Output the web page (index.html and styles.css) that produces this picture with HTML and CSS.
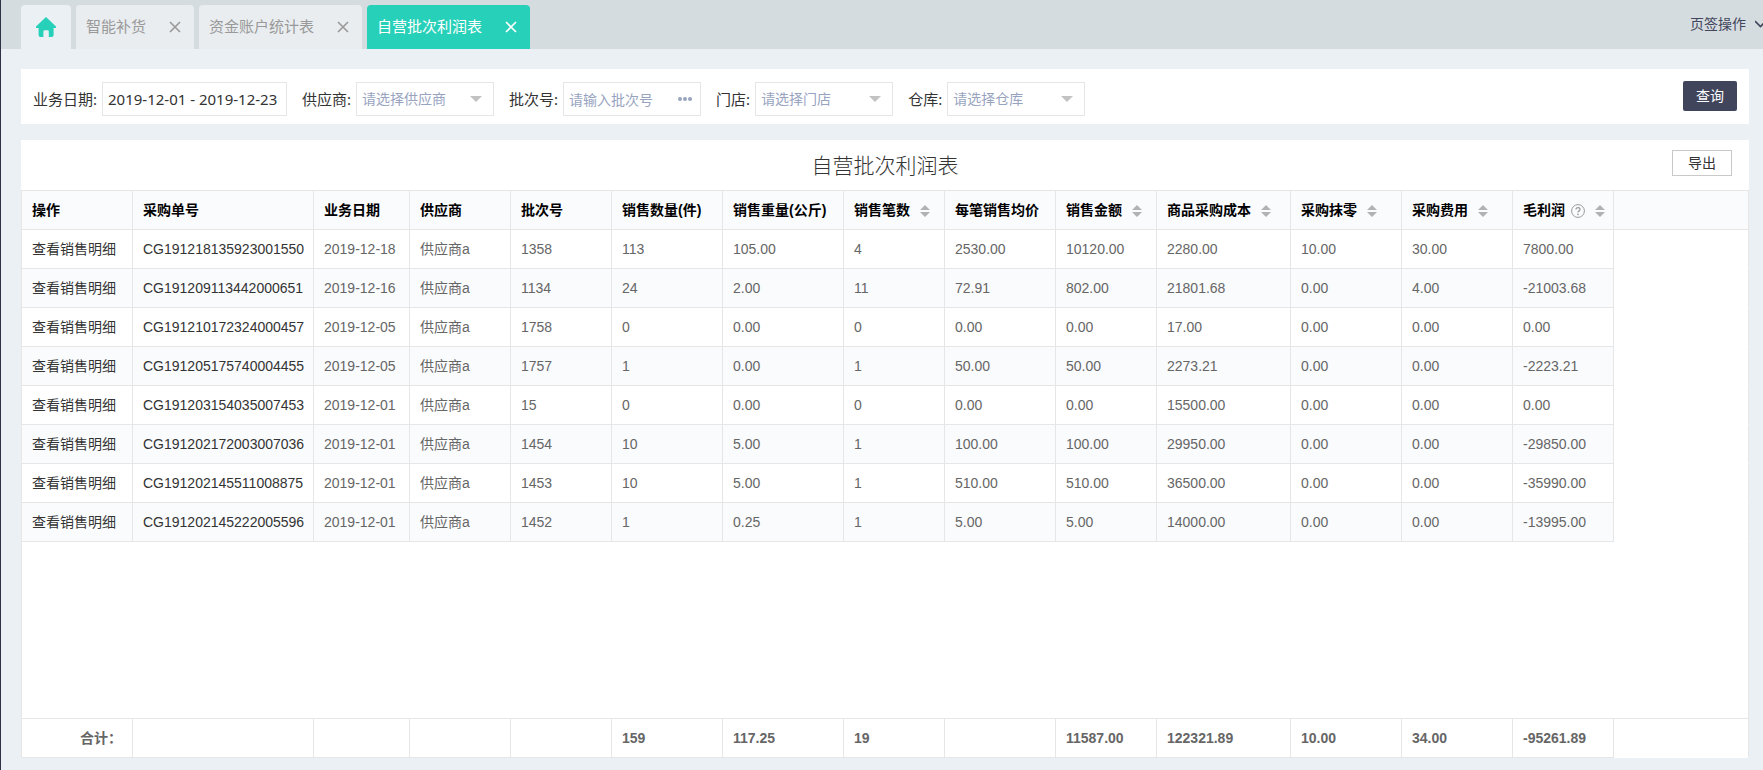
FILE: index.html
```html
<!DOCTYPE html>
<html lang="zh-CN">
<head>
<meta charset="utf-8">
<title>自营批次利润表</title>
<link rel="stylesheet" href="styles.css">
</head>
<body>
<svg class="sprite" aria-hidden="true">
  <symbol id="close" viewBox="0 0 12 12"><path d="M1 1l10 10M11 1L1 11" fill="none" stroke="currentColor" stroke-width="1.6"/></symbol>
  <symbol id="caret" viewBox="0 0 12 6"><path d="M0 0h12L6 6z" fill="currentColor"/></symbol>
  <symbol id="sort" viewBox="0 0 10 12"><path d="M0 5L5 0l5 5zM0 7h10l-5 5z" fill="currentColor"/></symbol>
</svg>

<header class="tabbar">
  <nav class="tabs">
    <a class="tab tab-home" href="#" aria-label="首页">
      <svg class="home-icon" viewBox="0 0 20 20"><path d="M10 0L20 9.6Q20.3 11 19 11H17.6V18Q17.6 20 15.8 20H12.8V14.5Q12.8 13.3 11.6 13.3H8.6Q7.4 13.3 7.4 14.5V20H4.4Q2.6 20 2.6 18V11H1Q-.3 11 0 9.6z" fill="currentColor"/></svg>
    </a>
    <div class="tab"><a href="#">智能补货</a><button class="tab-close" aria-label="关闭"><svg><use href="#close"/></svg></button></div>
    <div class="tab"><a href="#">资金账户统计表</a><button class="tab-close" aria-label="关闭"><svg><use href="#close"/></svg></button></div>
    <div class="tab tab-active"><a href="#">自营批次利润表</a><button class="tab-close" aria-label="关闭"><svg><use href="#close"/></svg></button></div>
  </nav>
  <button class="tab-ops">页签操作<svg viewBox="0 0 8 8"><path d="M0 1l5.500 5.500L11 1" fill="none" stroke="currentColor" stroke-width="1.600"/></svg></button>
</header>

<main class="content">
  <form class="panel filters">
    <div class="field"><label for="date">业务日期:</label><input id="date" class="control control-date" type="text" value="2019-12-01 - 2019-12-23"></div>
    <div class="field"><label for="supplier">供应商:</label><div class="control-box"><select id="supplier" class="control"><option>请选择供应商</option></select><svg class="caret"><use href="#caret"/></svg></div></div>
    <div class="field"><label for="batch">批次号:</label><div class="control-box"><input id="batch" class="control" type="text" placeholder="请输入批次号"><button class="more" type="button" aria-label="更多"><svg viewBox="0 0 14 4"><g fill="currentColor"><circle cx="2" cy="2" r="2"/><circle cx="7" cy="2" r="2"/><circle cx="12" cy="2" r="2"/></g></svg></button></div></div>
    <div class="field"><label for="store">门店:</label><div class="control-box"><select id="store" class="control"><option>请选择门店</option></select><svg class="caret"><use href="#caret"/></svg></div></div>
    <div class="field"><label for="depot">仓库:</label><div class="control-box"><select id="depot" class="control"><option>请选择仓库</option></select><svg class="caret"><use href="#caret"/></svg></div></div>
    <button class="btn-query" type="button">查询</button>
  </form>

  <section class="panel report">
    <div class="report-head">
      <h1>自营批次利润表</h1>
      <button class="btn-export">导出</button>
    </div>
    <div class="table-wrap">
      <table class="grid">
        <colgroup>
          <col class="w111"><col class="w181"><col class="w96"><col class="w101"><col class="w101"><col class="w111"><col class="w121"><col class="w101"><col class="w111"><col class="w101"><col class="w134"><col class="w111"><col class="w111"><col class="w101"><col>
        </colgroup>
        <thead>
          <tr>
            <th>操作</th><th>采购单号</th><th>业务日期</th><th>供应商</th><th>批次号</th><th>销售数量(件)</th><th>销售重量(公斤)</th>
            <th>销售笔数<svg class="sort"><use href="#sort"/></svg></th>
            <th>每笔销售均价</th>
            <th>销售金额<svg class="sort"><use href="#sort"/></svg></th>
            <th>商品采购成本<svg class="sort"><use href="#sort"/></svg></th>
            <th>采购抹零<svg class="sort"><use href="#sort"/></svg></th>
            <th>采购费用<svg class="sort"><use href="#sort"/></svg></th>
            <th>毛利润<svg class="help" viewBox="0 0 14 14"><g fill="none" stroke="currentColor"><circle cx="7" cy="7" r="6.400"/><path d="M5 5.600Q5 3.700 7 3.700T9 5.500Q9 6.500 7.800 7.100 7 7.500 7 8.600" stroke-width="1.200"/></g><circle cx="7" cy="10.400" r=".8" fill="currentColor"/></svg><svg class="sort"><use href="#sort"/></svg></th>
            <th></th>
          </tr>
        </thead>
        <tbody>
          <tr><td><a href="#">查看销售明细</a></td><td><a href="#">CG191218135923001550</a></td><td>2019-12-18</td><td>供应商a</td><td>1358</td><td>113</td><td>105.00</td><td>4</td><td>2530.00</td><td>10120.00</td><td>2280.00</td><td>10.00</td><td>30.00</td><td>7800.00</td><td></td></tr>
          <tr><td><a href="#">查看销售明细</a></td><td><a href="#">CG191209113442000651</a></td><td>2019-12-16</td><td>供应商a</td><td>1134</td><td>24</td><td>2.00</td><td>11</td><td>72.91</td><td>802.00</td><td>21801.68</td><td>0.00</td><td>4.00</td><td>-21003.68</td><td></td></tr>
          <tr><td><a href="#">查看销售明细</a></td><td><a href="#">CG191210172324000457</a></td><td>2019-12-05</td><td>供应商a</td><td>1758</td><td>0</td><td>0.00</td><td>0</td><td>0.00</td><td>0.00</td><td>17.00</td><td>0.00</td><td>0.00</td><td>0.00</td><td></td></tr>
          <tr><td><a href="#">查看销售明细</a></td><td><a href="#">CG191205175740004455</a></td><td>2019-12-05</td><td>供应商a</td><td>1757</td><td>1</td><td>0.00</td><td>1</td><td>50.00</td><td>50.00</td><td>2273.21</td><td>0.00</td><td>0.00</td><td>-2223.21</td><td></td></tr>
          <tr><td><a href="#">查看销售明细</a></td><td><a href="#">CG191203154035007453</a></td><td>2019-12-01</td><td>供应商a</td><td>15</td><td>0</td><td>0.00</td><td>0</td><td>0.00</td><td>0.00</td><td>15500.00</td><td>0.00</td><td>0.00</td><td>0.00</td><td></td></tr>
          <tr><td><a href="#">查看销售明细</a></td><td><a href="#">CG191202172003007036</a></td><td>2019-12-01</td><td>供应商a</td><td>1454</td><td>10</td><td>5.00</td><td>1</td><td>100.00</td><td>100.00</td><td>29950.00</td><td>0.00</td><td>0.00</td><td>-29850.00</td><td></td></tr>
          <tr><td><a href="#">查看销售明细</a></td><td><a href="#">CG191202145511008875</a></td><td>2019-12-01</td><td>供应商a</td><td>1453</td><td>10</td><td>5.00</td><td>1</td><td>510.00</td><td>510.00</td><td>36500.00</td><td>0.00</td><td>0.00</td><td>-35990.00</td><td></td></tr>
          <tr><td><a href="#">查看销售明细</a></td><td><a href="#">CG191202145222005596</a></td><td>2019-12-01</td><td>供应商a</td><td>1452</td><td>1</td><td>0.25</td><td>1</td><td>5.00</td><td>5.00</td><td>14000.00</td><td>0.00</td><td>0.00</td><td>-13995.00</td><td></td></tr>
          <tr class="spacer"><td colspan="15"></td></tr>
        </tbody>
        <tfoot>
          <tr><td class="total-label">合计：</td><td></td><td></td><td></td><td></td><td>159</td><td>117.25</td><td>19</td><td></td><td>11587.00</td><td>122321.89</td><td>10.00</td><td>34.00</td><td>-95261.89</td><td></td></tr>
        </tfoot>
      </table>
    </div>
  </section>
</main>
</body>
</html>
```
FILE: styles.css
```css
* { box-sizing: border-box; }

body {
  margin: 0;
  min-height: 100vh;
  display: flex;
  flex-direction: column;
  border-left: 1px solid #2f3144;
  background: #eaf0f4;
  color: #333;
  font: 14px/20px "Liberation Sans", "Noto Sans CJK SC", sans-serif;
}

a { color: inherit; text-decoration: none; }
button, input, select { font: inherit; color: inherit; margin: 0; }
button { padding: 0; border: 0; background: none; cursor: pointer; }
svg { display: block; flex: none; }
.sprite { display: none; }

/* Tab bar */
.tabbar {
  display: flex;
  justify-content: space-between;
  height: 49px;
  padding: 5px 0 0 20px;
  background: #d5dcdf;
}
.tabs { display: flex; gap: 5px; }
.tab {
  display: flex;
  align-items: center;
  gap: 23px;
  padding: 0 13px 0 10px;
  border-radius: 4px 4px 0 0;
  background: #e9edf0;
  color: #999;
  font-size: 15px;
}
.tab-home { width: 50px; padding: 0; justify-content: center; background: #ebf0f5; color: #27d0b8; }
.home-icon { width: 20px; height: 20px; }
.tab-active { background: #27d0b8; color: #fff; }
.tab-close svg { width: 12px; height: 12px; }
.tab-ops {
  display: flex;
  align-items: center;
  gap: 9px;
  padding-bottom: 6px;
  color: #41465c;
}
.tab-ops svg { width: 8px; height: 8px; }

/* Panels */
.content {
  flex: 1;
  display: flex;
  flex-direction: column;
  gap: 16px;
  padding: 20px 14px 12px 20px;
}
.panel { background: #fff; }

.filters {
  display: flex;
  align-items: flex-start;
  gap: 15px;
  padding: 12px 12px 8px;
  font: 15px/20px "Noto Sans", "Noto Sans CJK SC", sans-serif;
}
.field { display: flex; align-items: center; gap: 5px; padding-top: 1px; white-space: nowrap; }
.control {
  display: block;
  width: 138px;
  height: 34px;
  padding: 0 5px;
  border: 1px solid #e6e6e6;
  border-radius: 0;
  background: #fff;
  color: #98a4bf;
  font-size: 14px;
  appearance: none;
  outline: none;
}
.control::placeholder { color: #98a4bf; opacity: 1; }
.control-date { width: 185px; color: #333; font-size: 15px; }
.control-box { position: relative; }
.caret {
  position: absolute;
  top: 14px;
  right: 12px;
  width: 12px;
  height: 6px;
  color: #c2c2c2;
  pointer-events: none;
}
.more { position: absolute; top: 15px; right: 9px; color: #98a4bf; }
.more svg { width: 14px; height: 4px; }
.btn-query {
  width: 54px;
  height: 30px;
  margin-left: auto;
  border-radius: 2px;
  background: #40455b;
  color: #fff;
  font-size: 14px;
}

/* Report */
.report { flex: 1; display: flex; flex-direction: column; }
.report-head {
  display: grid;
  grid-template-columns: 1fr auto 1fr;
  align-items: center;
  height: 50px;
}
.report-head h1 {
  grid-column: 2;
  margin: 0;
  padding-top: 2px;
  font-size: 21px;
  font-weight: 300;
  line-height: 30px;
}
.btn-export {
  justify-self: end;
  width: 60px;
  height: 26px;
  margin: 0 17px 4px 0;
  border: 1px solid #c9c9c9;
  background: #fff;
}

.table-wrap { flex: 1; display: grid; overflow-x: auto; }
.grid {
  width: 100%;
  height: 100%;
  table-layout: fixed;
  border-collapse: separate;
  border-spacing: 0;
  border: solid #e6e6e6;
  border-width: 1px 0 0 1px;
  color: #666;
}
.grid th, .grid td {
  height: 39px;
  padding: 0 0 0 10px;
  border: solid #e6e6e6;
  border-width: 0 1px 1px 0;
  text-align: left;
  white-space: nowrap;
}
.grid th { background: #fafbfd; color: #000; font-weight: 700; }
.grid tbody tr:nth-child(even) td:not(:last-child) { background: #fafbfd; }
.grid tbody td:last-child, .grid tfoot td:last-child { border-bottom-color: transparent; }
.grid .spacer td { height: auto; border-bottom-color: #e6e6e6 !important; }
.grid td a { color: #333; }
.grid tfoot td { font-weight: 700; }
.grid .total-label { padding-right: 10px; text-align: right; }

.w96 { width: 96px; }
.w101 { width: 101px; }
.w111 { width: 111px; }
.w121 { width: 121px; }
.w134 { width: 134px; }
.w181 { width: 181px; }

.sort, .help { display: inline-block; vertical-align: middle; }
.sort { width: 10px; height: 12px; margin-left: 10px; color: #b2b2b2; }
.help { width: 14px; height: 14px; margin-left: 6px; color: #999; }
```
